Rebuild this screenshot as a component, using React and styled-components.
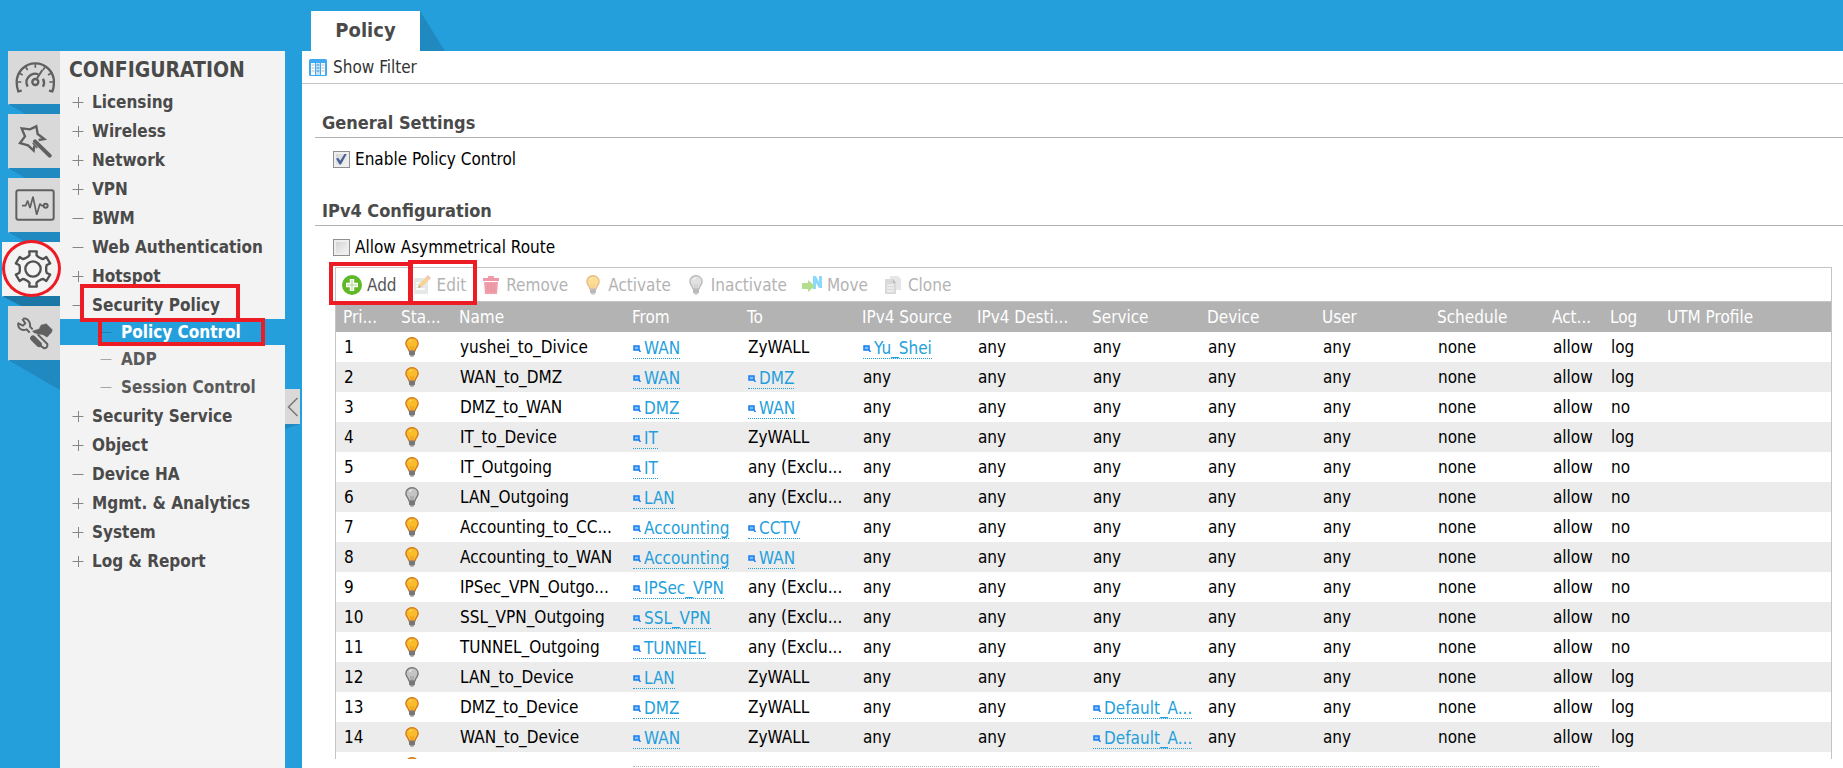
import { Fragment } from "react";
import styled, { createGlobalStyle } from "styled-components";

const BLUE = "#259fdc";
const RED = "#ed1c24";

const menu = [
  { label: "Licensing", sign: "+" },
  { label: "Wireless", sign: "+" },
  { label: "Network", sign: "+" },
  { label: "VPN", sign: "+" },
  { label: "BWM", sign: "-" },
  { label: "Web Authentication", sign: "-" },
  { label: "Hotspot", sign: "+" },
  {
    label: "Security Policy",
    sign: "-",
    marked: true,
    children: [
      { label: "Policy Control", active: true },
      { label: "ADP" },
      { label: "Session Control" },
    ],
  },
  { label: "Security Service", sign: "+" },
  { label: "Object", sign: "+" },
  { label: "Device HA", sign: "-" },
  { label: "Mgmt. & Analytics", sign: "+" },
  { label: "System", sign: "+" },
  { label: "Log & Report", sign: "+" },
];

const columns = [
  { label: "Pri...", width: 58 },
  { label: "Sta...", width: 58 },
  { label: "Name", width: 173 },
  { label: "From", width: 115 },
  { label: "To", width: 115 },
  { label: "IPv4 Source", width: 115 },
  { label: "IPv4 Desti...", width: 115 },
  { label: "Service", width: 115 },
  { label: "Device", width: 115 },
  { label: "User", width: 115 },
  { label: "Schedule", width: 115 },
  { label: "Act...", width: 58 },
  { label: "Log", width: 57 },
  { label: "UTM Profile" },
];

// values starting with "@" are references to an object
const policies = [
  { name: "yushei_to_Divice", from: "@WAN", to: "ZyWALL", source: "@Yu_Shei", log: "log" },
  { name: "WAN_to_DMZ", from: "@WAN", to: "@DMZ", log: "log" },
  { name: "DMZ_to_WAN", from: "@DMZ", to: "@WAN", log: "no" },
  { name: "IT_to_Device", from: "@IT", to: "ZyWALL", log: "log" },
  { name: "IT_Outgoing", from: "@IT", to: "any (Exclu...", log: "no" },
  { name: "LAN_Outgoing", from: "@LAN", to: "any (Exclu...", log: "no", off: true },
  { name: "Accounting_to_CC...", from: "@Accounting", to: "@CCTV", log: "no" },
  { name: "Accounting_to_WAN", from: "@Accounting", to: "@WAN", log: "no" },
  { name: "IPSec_VPN_Outgo...", from: "@IPSec_VPN", to: "any (Exclu...", log: "no" },
  { name: "SSL_VPN_Outgoing", from: "@SSL_VPN", to: "any (Exclu...", log: "no" },
  { name: "TUNNEL_Outgoing", from: "@TUNNEL", to: "any (Exclu...", log: "no" },
  { name: "LAN_to_Device", from: "@LAN", to: "ZyWALL", log: "log", off: true },
  { name: "DMZ_to_Device", from: "@DMZ", to: "ZyWALL", service: "@Default_A...", log: "log" },
  { name: "WAN_to_Device", from: "@WAN", to: "ZyWALL", service: "@Default_A...", log: "log" },
];

/* ---------- icons ---------- */

function DashboardIcon() {
  return (
    <svg width="40" height="31" viewBox="46 187 120 93" fill="none" stroke="#606060" strokeWidth="7">
      <path d="M66 273 L56 275 Q51 262 51 247 A56 56 0 0 1 163 247 Q163 262 158 275 L148 273" />
      <path
        strokeWidth="5"
        d="M54 247h11M160 247h-11M60 221l9 5M78 202l6 9M107 194v10M136 202l-6 9M154 221l-9 5"
      />
      <path d="M84 261 A26 26 0 0 1 116 224 M130 237 A26 26 0 0 1 130 261" />
      <circle cx="107" cy="247" r="9" />
      <path d="M111 238 L128 211" strokeWidth="6" />
    </svg>
  );
}

function WizardIcon() {
  return (
    <svg width="34" height="34" viewBox="52 375 102 102" fill="none" stroke="#606060" strokeWidth="7">
      <path d="M101 440 L99 455 L82 439 L58 432 L73 412 L63 388 L88 391 L107 382 L111 405 L131 420 L114 423" />
      <path d="M103 427 L147 470" strokeWidth="12" strokeLinecap="round" />
      <path d="M96 432 L110 447" strokeWidth="4" />
    </svg>
  );
}

function MonitorIcon() {
  return (
    <svg width="40" height="32" viewBox="45 570 120 96" fill="none" stroke="#606060" strokeWidth="6">
      <rect x="49" y="574" width="112" height="88" rx="6" />
      <path d="M66 620h11l6-15 7 22 9-34 11 54 10-33 5 6h5" strokeWidth="5" strokeLinejoin="bevel" />
      <circle cx="137" cy="620" r="6" />
    </svg>
  );
}

function gearPath() {
  const pts = [];
  for (let i = 0; i < 6; i++) {
    const mid = -90 + i * 60;
    [
      [-22, 40],
      [-14, 43],
      [-12, 54],
      [12, 54],
      [14, 43],
      [22, 40],
    ].forEach(([a, r]) => {
      const t = ((mid + a) * Math.PI) / 180;
      pts.push(`${(r * Math.cos(t)).toFixed(1)} ${(r * Math.sin(t)).toFixed(1)}`);
    });
  }
  return `M${pts.join("L")}Z`;
}

function GearIcon() {
  return (
    <svg width="40" height="40" viewBox="-60 -60 120 120" fill="none" stroke="#505050" strokeWidth="7" strokeLinejoin="round">
      <path d={gearPath()} />
      <circle r="23" />
    </svg>
  );
}

function ToolsIcon() {
  return (
    <svg width="36" height="33" viewBox="46 948 108 99" fill="none" stroke="#606060" strokeWidth="6" strokeLinejoin="round">
      <path d="M64 953 Q74 951 80 958 Q87 966 85 977 L93 985 M84 995 L75 985 Q62 990 54 982 Q48 975 50 967 L64 974 L71 967 L62 954" />
      <path d="M92 990 L112 984 L118 972 L134 968 L152 986 L150 994 L136 1009 L124 1001 L112 1000 L98 996 Z" fill="#606060" strokeWidth="1" />
      <path d="M108 1000 L137 1029 Q139 1040 128 1042 L116 1034" />
      <path d="M94 1012 L112 1030" strokeWidth="17" strokeLinecap="round" />
    </svg>
  );
}

function Sign({ type, light }) {
  return (
    <svg width="12" height="12" viewBox="0 0 12 12" stroke={light || "#858585"} aria-hidden="true">
      <path d={type === "+" ? "M0.5 6.5h11M6.5 1v11" : "M0.5 6.5h11"} />
    </svg>
  );
}

function Bulb({ off }) {
  const dark = off ? "#777" : "#d27a18";
  return (
    <svg width="14" height="20" viewBox="0 0 14 20" aria-hidden="true">
      <path
        d="M7 .7C3.300.7.9 3.300.9 6.500c0 3 2.600 4.200 3.100 7.300h6c.5-3.100 3.100-4.300 3.100-7.300C13.100 3.300 10.700.7 7 .7z"
        fill={off ? "#c4c4c4" : "#fbbc2c"}
        stroke={dark}
        strokeWidth="1.4"
      />
      <path d="M4.500 5c.5-1.300 1.400-2 2.600-2.200" stroke={off ? "#eee" : "#ffd95e"} fill="none" strokeWidth="1.200" />
      <path d="M5.700 9l.6 4.500M8.300 9l-.6 4.500" stroke={off ? "#999" : "#e89a20"} fill="none" />
      <path d="M4 13.500h6v3.500L8.300 19.700H5.700L4 17z" fill="#999" />
      <path d="M4 15h6M4 17h6" stroke="#555" />
    </svg>
  );
}

function AddIcon() {
  return (
    <svg width="20" height="20" viewBox="0 0 20 20">
      <circle cx="10" cy="10" r="10" fill="#5fb925" />
      <path d="M10 4v12M4 10h12" stroke="#fff" strokeWidth="4.500" />
      <path d="M10 5v10M5 10h10" stroke="#a5d983" strokeWidth="1" />
    </svg>
  );
}

function EditIcon() {
  return (
    <svg width="20" height="20" viewBox="0 0 20 20">
      <path d="M2 3h14v16H2z" fill="#cfd0d2" />
      <path d="M4 8h5M4 11h4M4 14h9" stroke="#fff" strokeWidth="1.500" />
      <path d="M6 13l1-4 8-8 3 3-8 8z" fill="#f0ab2e" />
      <path d="M6 13l1-3 2 2z" fill="#555" />
      <path d="M14 2l2-2 3 3-2 2z" fill="#e88f86" />
    </svg>
  );
}

function TrashIcon() {
  return (
    <svg width="20" height="20" viewBox="0 0 20 20">
      <path d="M7 1h6v2H7z" fill="#e0445a" />
      <path d="M2 3h16v3H2z" fill="#dd3350" />
      <path d="M3 7h14l-1 12H4z" fill="#e8405a" />
      <path d="M7 8v9M10 8v9M13 8v9" stroke="#c02040" />
    </svg>
  );
}

function MoveIcon() {
  return (
    <svg width="20" height="20" viewBox="0 0 20 20">
      <path d="M11 14V1h3l3 6V1h3v12h-3l-3-5v6z" fill="#1cb4ff" />
      <path d="M0 8h6V5l7 6-7 6v-3H0z" fill="#68be20" />
    </svg>
  );
}

function CloneIcon() {
  return (
    <svg width="20" height="20" viewBox="0 0 20 20">
      <path d="M7 1h8l3 3v11H7z" fill="#cfcfcf" />
      <path d="M2 4h8l3 4v11H2z" fill="#b4b4b4" />
      <path d="M10 4v4h3z" fill="#777" />
      <path d="M4 10h7M4 13h7M4 16h7" stroke="#fff" />
    </svg>
  );
}

function FilterIcon() {
  return (
    <svg width="18" height="17" viewBox="0 0 18 17" aria-hidden="true">
      <rect width="18" height="17" rx="1.500" fill="#3fa9f5" />
      <path d="M2 4h4v12H2zM12 4h4v12h-4z" fill="#fff" />
      <path d="M7 4h4v12H7z" fill="#c4e4fc" />
      <path d="M2.500 6h3M2.500 9h3M2.500 12h3M12.500 6h3M12.500 9h3M12.500 12h3" stroke="#c9b2a4" />
      <path d="M7.500 6h3M7.500 9h3M7.500 12h3" stroke="#2b8fdd" />
    </svg>
  );
}

function RefIcon() {
  return (
    <svg width="8" height="8" viewBox="0 0 8 8" aria-hidden="true">
      <path d="M1 2h5v4H1z" fill="#7cc0ff" stroke="#1a7df0" strokeWidth="1.500" />
      <path d="M6 6l1.500 2" stroke="#1a7df0" strokeWidth="1.500" />
    </svg>
  );
}

const rail = [
  { label: "Dashboard", icon: <DashboardIcon /> },
  { label: "Wizard", icon: <WizardIcon /> },
  { label: "Monitor", icon: <MonitorIcon /> },
  { label: "Configuration", icon: <GearIcon />, active: true },
  { label: "Maintenance", icon: <ToolsIcon /> },
];

const tools = [
  { label: "Add", icon: <AddIcon />, mark: "add" },
  { label: "Edit", icon: <EditIcon />, mark: "edit", disabled: true },
  { label: "Remove", icon: <TrashIcon />, disabled: true },
  { label: "Activate", icon: <Bulb />, disabled: true },
  { label: "Inactivate", icon: <Bulb off />, disabled: true },
  { label: "Move", icon: <MoveIcon />, disabled: true },
  { label: "Clone", icon: <CloneIcon />, disabled: true },
];

function Value({ children }) {
  if (!children.startsWith("@")) return children;
  return (
    <ObjectLink href="#">
      <RefIcon />
      {children.slice(1)}
    </ObjectLink>
  );
}

function App() {
  return (
    <Page>
      <GlobalStyle />
      <Rail>
        {rail.map((item) => (
          <RailButton key={item.label} aria-label={item.label} $active={item.active}>
            {item.icon}
            {item.active && <CircleMark />}
          </RailButton>
        ))}
      </Rail>
      <Menu>
        <MenuTitle>CONFIGURATION</MenuTitle>
        {menu.map((item) => (
          <Fragment key={item.label}>
            <MenuItem href="#">
              <Sign type={item.sign} />
              {item.label}
              {item.marked && <ParentMark />}
            </MenuItem>
            {item.children?.map((child) => (
              <SubItem href="#" key={child.label} $active={child.active}>
                <Sign type="-" light={child.active ? "#1d7fb0" : "#a5a5a5"} />
                {child.label}
                {child.active && <ChildMark />}
              </SubItem>
            ))}
          </Fragment>
        ))}
      </Menu>
      <Gutter>
        <CollapseButton aria-label="Collapse menu">
          <svg width="12" height="20" viewBox="0 0 12 20" fill="none" stroke="#777" strokeWidth="1.500">
            <path d="M10.500 1L1.500 10l9 9" />
          </svg>
        </CollapseButton>
      </Gutter>
      <Main>
        <Tabs>
          <Tab>Policy</Tab>
        </Tabs>
        <Content>
          <FilterBar>
            <FilterButton>
              <FilterIcon />
              Show Filter
            </FilterButton>
          </FilterBar>
          <Section>
            <SectionTitle>General Settings</SectionTitle>
            <CheckLabel>
              <Checkbox defaultChecked />
              Enable Policy Control
            </CheckLabel>
          </Section>
          <Section>
            <SectionTitle>IPv4 Configuration</SectionTitle>
            <CheckLabel>
              <Checkbox />
              Allow Asymmetrical Route
            </CheckLabel>
          </Section>
          <Grid>
            <Toolbar>
              {tools.map((tool) => (
                <ToolButton key={tool.label} disabled={tool.disabled}>
                  <ToolIcon>{tool.icon}</ToolIcon>
                  <span>{tool.label}</span>
                  {tool.mark === "add" && <AddMark />}
                  {tool.mark === "edit" && <EditMark />}
                </ToolButton>
              ))}
            </Toolbar>
            <Table>
              <colgroup>
                {columns.map((col) => (
                  <col key={col.label} width={col.width} />
                ))}
              </colgroup>
              <thead>
                <tr>
                  {columns.map((col) => (
                    <th key={col.label}>{col.label}</th>
                  ))}
                </tr>
              </thead>
              <tbody>
                {policies.map((row, i) => (
                  <tr key={row.name}>
                    <td>{i + 1}</td>
                    <BulbCell>
                      <Bulb off={row.off} />
                    </BulbCell>
                    <td>{row.name}</td>
                    <td>
                      <Value>{row.from}</Value>
                    </td>
                    <td>
                      <Value>{row.to}</Value>
                    </td>
                    <td>
                      <Value>{row.source || "any"}</Value>
                    </td>
                    <td>any</td>
                    <td>
                      <Value>{row.service || "any"}</Value>
                    </td>
                    <td>any</td>
                    <td>any</td>
                    <td>none</td>
                    <td>allow</td>
                    <td>{row.log}</td>
                    <td />
                  </tr>
                ))}
                <tr>
                  <td />
                  <BulbCell>
                    <Bulb />
                  </BulbCell>
                  <td colSpan={12} />
                </tr>
              </tbody>
            </Table>
          </Grid>
          <GridEdge />
        </Content>
      </Main>
    </Page>
  );
}

const GlobalStyle = createGlobalStyle`
  * {
    box-sizing: border-box;
  }
  body {
    margin: 0;
    background: ${BLUE};
    color: #000;
    font: 17px/20px "DejaVu Sans Condensed", "DejaVu Sans", sans-serif;
  }
  button {
    padding: 0;
    border: 0;
    background: none;
    font: inherit;
    cursor: pointer;
  }
  a {
    text-decoration: none;
  }
  svg {
    display: block;
    flex: none;
  }
`;

const Page = styled.div`
  display: flex;
  height: 100vh;
  overflow: hidden;
`;

const Rail = styled.nav`
  display: flex;
  flex-direction: column;
  align-items: flex-end;
  gap: 9px;
  flex: none;
  width: 60px;
  padding-top: 51px;
`;

const RailButton = styled.button`
  position: relative;
  display: flex;
  align-items: center;
  justify-content: center;
  width: ${(p) => (p.$active ? 58 : 52)}px;
  height: 55px;
  padding-left: ${(p) => (p.$active ? 4 : 2)}px;
  border-bottom: 1px solid #a9cfe2;
  background: ${(p) => (p.$active ? "#f3f3f3" : "#d9d9d9")};
  &:first-child {
    height: 54px;
  }
  /* long shadow, hidden by the next button */
  &::after {
    content: "";
    position: absolute;
    top: 100%;
    left: 0;
    right: 0;
    height: 30px;
    background: ${(p) => (p.$active ? "#1b77a5" : "#2089c0")};
    clip-path: polygon(0 0, 100% 0, 100% 100%);
  }
`;

const Mark = styled.span`
  position: absolute;
  z-index: 2;
  border: 4px solid ${RED};
  pointer-events: none;
`;

const CircleMark = styled(Mark)`
  top: -2px;
  left: 0;
  width: 59px;
  height: 57px;
  border-width: 3px;
  border-radius: 50%;
`;

const ParentMark = styled(Mark)`
  inset: -6px 45px -3px 20px;
`;

const ChildMark = styled(Mark)`
  inset: -1px 20px -1px 38px;
`;

const AddMark = styled(Mark)`
  inset: -6px -16px -4px -13px;
`;

const EditMark = styled(Mark)`
  inset: -8px -11px -4px -4px;
`;

const Menu = styled.nav`
  flex: none;
  width: 225px;
  margin-top: 51px;
  background: #f3f3f3;
`;

const MenuTitle = styled.h1`
  margin: 0;
  padding: 6px 9px 4px;
  color: #4a4a4a;
  font-size: 21px;
  line-height: 26px;
`;

const MenuItem = styled.a`
  position: relative;
  display: flex;
  align-items: center;
  gap: 8px;
  height: 29px;
  padding-left: 12px;
  color: #4a4a4a;
  font-weight: bold;
`;

const SubItem = styled(MenuItem)`
  gap: 9px;
  height: ${(p) => (p.$active ? 26 : 28)}px;
  padding-left: 40px;
  background: ${(p) => (p.$active ? BLUE : "none")};
  color: ${(p) => (p.$active ? "#fff" : "#5a5a5a")};
`;

const Gutter = styled.div`
  display: flex;
  align-items: center;
  flex: none;
  width: 17px;
  padding-top: 45px;
`;

const CollapseButton = styled.button`
  position: relative;
  display: flex;
  align-items: center;
  justify-content: center;
  width: 15px;
  height: 35px;
  background: #d9d9d9;
  &::after {
    content: "";
    position: absolute;
    top: 100%;
    left: 0;
    width: 100%;
    height: 5px;
    background: #2089c0;
    clip-path: polygon(0 0, 100% 0, 0 100%);
  }
`;

const Main = styled.main`
  display: flex;
  flex-direction: column;
  flex: 1;
  min-width: 0;
`;

const Tabs = styled.div`
  flex: none;
  display: flex;
  padding: 11px 9px 0;
`;

const Tab = styled.button`
  position: relative;
  width: 109px;
  height: 40px;
  padding-bottom: 3px;
  background: #fff;
  color: #4a4a4a;
  font-size: 20px;
  font-weight: bold;
  &::after {
    content: "";
    position: absolute;
    top: 0;
    left: 100%;
    width: 25px;
    height: 40px;
    background: #2089c0;
    clip-path: polygon(0 0, 100% 100%, 0 100%);
  }
`;

const Content = styled.div`
  display: flex;
  flex-direction: column;
  flex: 1;
  min-height: 0;
  background: #fff;
`;

const FilterBar = styled.div`
  flex: none;
  height: 33px;
  margin-bottom: 28px;
  border-bottom: 1px solid #c4c4c4;
`;

const FilterButton = styled.button`
  display: flex;
  align-items: center;
  gap: 6px;
  height: 32px;
  padding-left: 7px;
  color: #333;
`;

const Section = styled.section`
  flex: none;
  padding-left: 13px;
  & + & {
    margin-top: 31px;
  }
`;

const SectionTitle = styled.h2`
  margin: 0 0 11px;
  padding: 0 7px 3px;
  border-bottom: 1px solid #b3b3b3;
  color: #4a4a4a;
  font-size: 18px;
  line-height: 22px;
`;

const CheckLabel = styled.label`
  display: flex;
  align-items: center;
  gap: 5px;
  margin-left: 18px;
`;

const Checkbox = styled.input.attrs({ type: "checkbox" })`
  appearance: none;
  width: 17px;
  height: 17px;
  margin: 0;
  border: 1px solid #8e8f8f;
  background: linear-gradient(135deg, #cfcfd2, #f8f8f8);
  box-shadow: inset 0 0 0 2px #eee;
  &:checked::after {
    content: "";
    display: block;
    width: 11px;
    height: 11px;
    margin: 2px;
    background: #4a5f97;
    clip-path: polygon(0 45%, 22% 40%, 38% 65%, 80% 0, 100% 0, 45% 100%, 32% 100%);
  }
`;

const Grid = styled.div`
  flex: 1;
  min-height: 0;
  margin: 10px 11px 0 33px;
  border: 1px solid #c4c4c4;
  border-bottom: 0;
  /* the marks stick out of the frame, the rows are cut at its foot */
  clip-path: inset(-10px -10px 0);
`;

const Toolbar = styled.div`
  display: flex;
  align-items: center;
  gap: 15px;
  height: 34px;
  padding-left: 6px;
  border-bottom: 1px solid #c4c4c4;
`;

const ToolButton = styled.button`
  position: relative;
  display: flex;
  align-items: center;
  gap: 5px;
  height: 33px;
  color: #555;
  &:disabled {
    color: #b3b3b3;
  }
  &:disabled svg {
    opacity: 0.5;
  }
`;

const ToolIcon = styled.span`
  display: flex;
  justify-content: center;
  width: 20px;
`;

const Table = styled.table`
  width: 100%;
  table-layout: fixed;
  border-collapse: collapse;
  th,
  td {
    height: 30px;
    padding: 0 0 0 7px;
    overflow: hidden;
    text-align: left;
    white-space: nowrap;
  }
  td {
    padding-left: 8px;
  }
  th {
    background: #b3b3b3;
    color: #fff;
    font-weight: normal;
  }
  tbody tr:nth-child(even) {
    background: #ececec;
  }
`;

const BulbCell = styled.td`
  svg {
    margin-left: 3px;
  }
`;

const ObjectLink = styled.a`
  display: inline-flex;
  align-items: center;
  gap: 3px;
  margin-top: 2px;
  border-bottom: 1px dotted ${BLUE};
  color: ${BLUE};
`;

const GridEdge = styled.div`
  flex: none;
  height: 8px;
  margin: 0 244px 1px 331px;
  border-bottom: 1px dotted #b3b3b3;
`;

export default App;
